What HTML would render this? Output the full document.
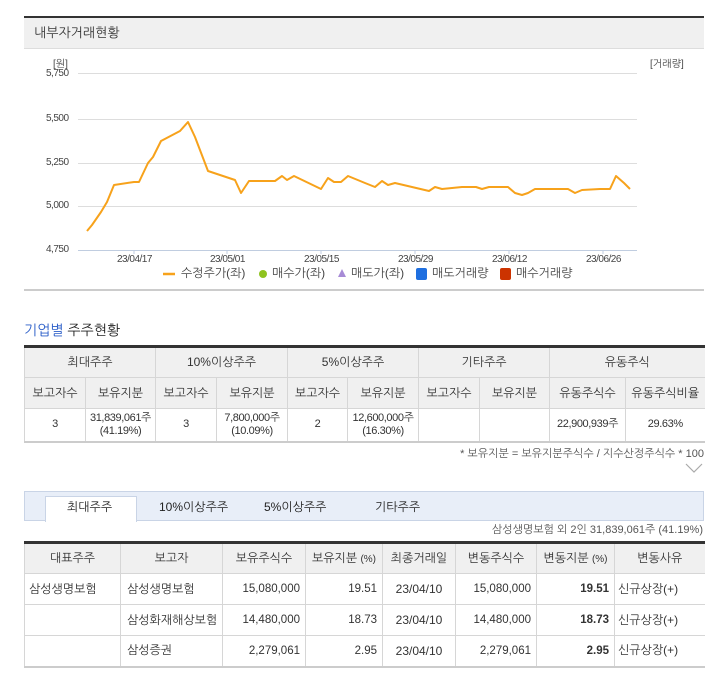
<!DOCTYPE html>
<html><head><meta charset="utf-8">
<style>
*{margin:0;padding:0;box-sizing:border-box}
body{width:718px;height:680px;background:#fff;position:relative;overflow:hidden;font-family:"Liberation Sans","NanumGothic","Noto Sans CJK KR",sans-serif;font-size:12px;color:#333}
.a{position:absolute;white-space:nowrap}
table{border-collapse:collapse;position:absolute;table-layout:fixed}
td,th{font-weight:normal;text-align:center;border:1px solid #d6d6d6;border-top:none;padding:0;white-space:nowrap;overflow:hidden}
th{background:#f0f0f0}
.r{text-align:right;padding-right:5px;font-family:"Liberation Sans",sans-serif;font-size:11.5px}
.l{text-align:left;padding-left:6px}
.t1 td{font-size:11px;letter-spacing:-.4px;line-height:13px}
</style></head><body>
<div class="a" style="left:24px;top:16px;width:680px;height:2px;background:#333"></div>
<div class="a" style="left:24px;top:18px;width:680px;height:31px;background:#f0f0f0;border-bottom:1px solid #ddd"></div>
<div class="a" style="left:34px;top:25px;font-size:13px;color:#333">내부자거래현황</div>
<svg class="a" style="left:0;top:0" width="718" height="300">
<g stroke="#ddd" stroke-width="1">
<line x1="78" y1="73.5" x2="637" y2="73.5"/>
<line x1="78" y1="119.5" x2="637" y2="119.5"/>
<line x1="78" y1="163.5" x2="637" y2="163.5"/>
<line x1="78" y1="206.5" x2="637" y2="206.5"/>
</g>
<line x1="78" y1="250.5" x2="637" y2="250.5" stroke="#c0cde0"/>
<g stroke="#c0cde0"><line x1="134" y1="250" x2="134" y2="254"/><line x1="227" y1="250" x2="227" y2="254"/><line x1="321" y1="250" x2="321" y2="254"/><line x1="415" y1="250" x2="415" y2="254"/><line x1="509" y1="250" x2="509" y2="254"/><line x1="603" y1="250" x2="603" y2="254"/></g>
<polyline fill="none" stroke="#f7a21b" stroke-width="2" stroke-linejoin="round" points="
87,231 92,225 101,212 107,202 114,185 134,182 139,182 148,163 153,157 161,141 180,131 188,122 195,137 208,171 235,180 241,193 249,181 275,181 282,176 287,180 294,176 321,189 328,178 334,182 341,182 348,176 365,183 375,187 382,181 388,185 395,183 429,191 435,187 442,189 462,187 476,187 482,189 489,187 508,187 515,193 522,195 528,193 535,189 568,189 575,193 582,190 600,189 610,189 616,176 624,183 630,189"/>
<line x1="163" y1="274" x2="175" y2="274" stroke="#f7a21b" stroke-width="2.5"/>
<circle cx="263" cy="274" r="4" fill="#8fc31f"/>
<polygon points="342,269 346,277 338,277" fill="#a78bd6"/>
<rect x="416" y="268" width="11" height="12" rx="2" fill="#1f6fe0"/>
<rect x="500" y="268" width="11" height="12" rx="2" fill="#cc3300"/>
</svg>
<div class="a" style="left:53px;top:58px;font-size:10px;color:#444">[원]</div>
<div class="a" style="left:650px;top:58px;font-size:10px;color:#444">[거래량]</div>
<div class="a" style="left:46px;top:68px;font-size:10px;color:#444;letter-spacing:-.5px">5,750</div>
<div class="a" style="left:46px;top:113px;font-size:10px;color:#444;letter-spacing:-.5px">5,500</div>
<div class="a" style="left:46px;top:157px;font-size:10px;color:#444;letter-spacing:-.5px">5,250</div>
<div class="a" style="left:46px;top:200px;font-size:10px;color:#444;letter-spacing:-.5px">5,000</div>
<div class="a" style="left:46px;top:244px;font-size:10px;color:#444;letter-spacing:-.5px">4,750</div>
<div class="a" style="left:117px;top:254px;font-size:10px;color:#444;letter-spacing:-.5px">23/04/17</div>
<div class="a" style="left:210px;top:254px;font-size:10px;color:#444;letter-spacing:-.5px">23/05/01</div>
<div class="a" style="left:304px;top:254px;font-size:10px;color:#444;letter-spacing:-.5px">23/05/15</div>
<div class="a" style="left:398px;top:254px;font-size:10px;color:#444;letter-spacing:-.5px">23/05/29</div>
<div class="a" style="left:492px;top:254px;font-size:10px;color:#444;letter-spacing:-.5px">23/06/12</div>
<div class="a" style="left:586px;top:254px;font-size:10px;color:#444;letter-spacing:-.5px">23/06/26</div>
<div class="a" style="left:181px;top:266px;font-size:12px;color:#444">수정주가(좌)</div>
<div class="a" style="left:272px;top:266px;font-size:12px;color:#444">매수가(좌)</div>
<div class="a" style="left:351px;top:266px;font-size:12px;color:#444">매도가(좌)</div>
<div class="a" style="left:432px;top:266px;font-size:12px;color:#444">매도거래량</div>
<div class="a" style="left:516px;top:266px;font-size:12px;color:#444">매수거래량</div>
<div class="a" style="left:24px;top:289px;width:680px;height:2px;background:#ccc"></div>

<div class="a" style="left:24px;top:322px;font-size:14px;color:#222"><span style="color:#2a5dc8">기업별</span> 주주현황</div>
<table class="t1" style="left:24px;top:345px;width:680px;border-top:3px solid #333;border-bottom:2px solid #ccc">
<colgroup><col style="width:61px"><col style="width:70px"><col style="width:61px"><col style="width:71px"><col style="width:60px"><col style="width:71px"><col style="width:61px"><col style="width:70px"><col style="width:76px"><col style="width:79px"></colgroup>
<tr style="height:31px"><th colspan="2">최대주주</th><th colspan="2">10%이상주주</th><th colspan="2">5%이상주주</th><th colspan="2">기타주주</th><th colspan="2" style="border-right:none">유동주식</th></tr>
<tr style="height:31px"><th>보고자수</th><th>보유지분</th><th>보고자수</th><th>보유지분</th><th>보고자수</th><th>보유지분</th><th>보고자수</th><th>보유지분</th><th>유동주식수</th><th style="border-right:none">유동주식비율</th></tr>
<tr style="height:33px"><td>3</td><td>31,839,061주<br>(41.19%)</td><td>3</td><td>7,800,000주<br>(10.09%)</td><td>2</td><td>12,600,000주<br>(16.30%)</td><td></td><td></td><td>22,900,939주</td><td style="border-right:none">29.63%</td></tr>
</table>
<div class="a" style="right:14px;top:447px;font-size:11px;color:#555">* 보유지분 = 보유지분주식수 / 지수산정주식수 * 100</div>
<svg class="a" style="left:685px;top:462px" width="18" height="12"><polyline points="1,2 9,10 17,2" fill="none" stroke="#aaa" stroke-width="1.2"/></svg>

<div class="a" style="left:24px;top:491px;width:680px;height:30px;background:#e8eef8;border:1px solid #c9d4e6"></div>
<div class="a" style="left:45px;top:496px;width:92px;height:26px;background:#fff;border:1px solid #c9d4e6;border-bottom:none"></div>
<div class="a" style="left:67px;top:500px;font-size:12px;color:#222">최대주주</div>
<div class="a" style="left:159px;top:500px;font-size:12px;color:#222">10%이상주주</div>
<div class="a" style="left:264px;top:500px;font-size:12px;color:#222">5%이상주주</div>
<div class="a" style="left:375px;top:500px;font-size:12px;color:#222">기타주주</div>
<div class="a" style="right:15px;top:523px;font-size:11px;color:#555">삼성생명보험 외 2인 31,839,061주 (41.19%)</div>
<table style="left:24px;top:541px;width:680px;border-top:3px solid #333;border-bottom:2px solid #ccc">
<colgroup><col style="width:96px"><col style="width:102px"><col style="width:83px"><col style="width:77px"><col style="width:73px"><col style="width:81px"><col style="width:78px"><col style="width:90px"></colgroup>
<tr style="height:31px"><th>대표주주</th><th>보고자</th><th>보유주식수</th><th>보유지분 <span style="font-size:10px">(%)</span></th><th>최종거래일</th><th>변동주식수</th><th>변동지분 <span style="font-size:10px">(%)</span></th><th style="border-right:none">변동사유</th></tr>
<tr style="height:31px"><td class="l" style="padding-left:4px">삼성생명보험</td><td class="l">삼성생명보험</td><td class="r">15,080,000</td><td class="r">19.51</td><td>23/04/10</td><td class="r">15,080,000</td><td class="r" style="font-weight:bold">19.51</td><td class="l" style="border-right:none;padding-left:3px">신규상장(+)</td></tr>
<tr style="height:31px"><td></td><td class="l">삼성화재해상보험</td><td class="r">14,480,000</td><td class="r">18.73</td><td>23/04/10</td><td class="r">14,480,000</td><td class="r" style="font-weight:bold">18.73</td><td class="l" style="border-right:none;padding-left:3px">신규상장(+)</td></tr>
<tr style="height:31px"><td></td><td class="l">삼성증권</td><td class="r">2,279,061</td><td class="r">2.95</td><td>23/04/10</td><td class="r">2,279,061</td><td class="r" style="font-weight:bold">2.95</td><td class="l" style="border-right:none;padding-left:3px">신규상장(+)</td></tr>
</table>
</body></html>
